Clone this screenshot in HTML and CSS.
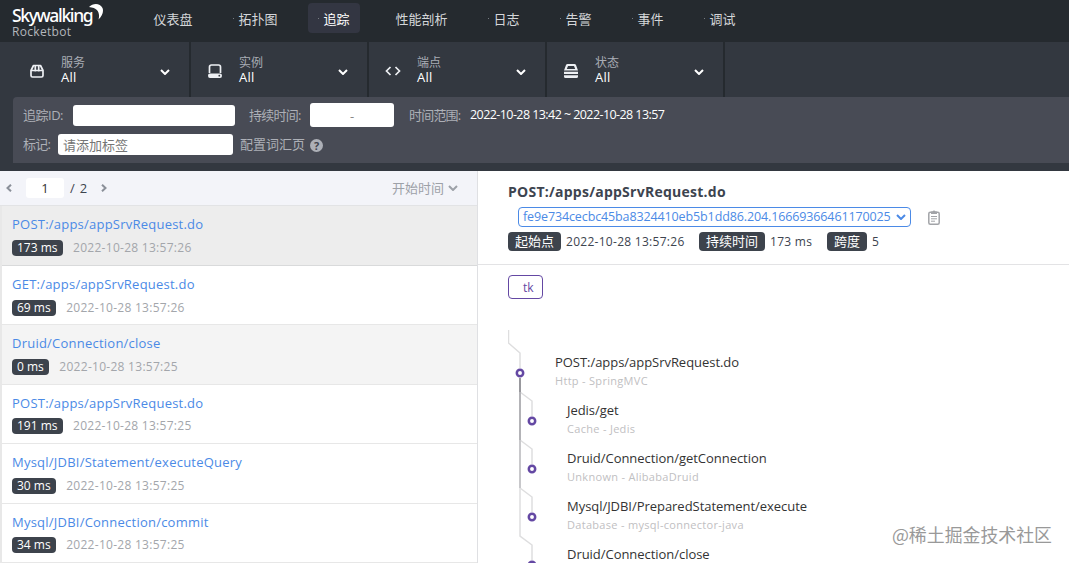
FILE: index.html
```html
<!DOCTYPE html>
<html lang="zh-CN">
<head>
<meta charset="UTF-8">
<meta name="viewport" content="width=device-width, initial-scale=1.0">
<title>SkyWalking Rocketbot</title>
<link rel="stylesheet" href="styles.css">
</head>
<body>
<header class="header">
	<div class="logo">
		<div class="logo-name"><span>Skywalking</span><svg class="moon" width="15" height="17" viewBox="0 0 15 17"><path d="M0 3C4-1 11-1 13.500 4C15 8 13 12 9.500 15.500C11 10 10 4 0 3z" fill="#fff"/></svg></div>
		<div class="logo-sub">Rocketbot</div>
	</div>
	<nav class="nav">
		<a class="first">仪表盘</a>
		<a>拓扑图</a>
		<a class="active">追踪</a>
		<a class="nodot">性能剖析</a>
		<a>日志</a>
		<a>告警</a>
		<a>事件</a>
		<a>调试</a>
	</nav>
</header>

<div class="tools">
	<div class="selectors">
		<div class="selector">
			<svg class="icon" viewBox="0 0 16 16" fill="none" stroke="#eef0f4" stroke-width="1.700" stroke-linejoin="round"><path d="M2 7.500L4.500 2.500H11.500L14 7.500V12.500Q14 14 12.500 14H3.500Q2 14 2 12.500zM2 7.500H14M6.300 3V8.500M9.700 3V8.500"/></svg>
			<div class="sel-text"><span>服务</span><b>All</b></div>
			<svg class="arrow" viewBox="0 0 10 6"><path d="M1 1L5 5L9 1"/></svg>
		</div>
		<div class="selector">
			<svg class="icon" viewBox="0 0 16 16"><path d="M2.500 10V4Q2.500 2 4.500 2H11.500Q13.500 2 13.500 4V10" fill="none" stroke="#eef0f4" stroke-width="1.700"/><path d="M3 10.500H13Q15 10.500 15 12.700T13 15H3Q1 15 1 12.700T3 10.500z" fill="#eef0f4"/><circle cx="12.300" cy="12.700" r=".9" fill="#333840"/></svg>
			<div class="sel-text"><span>实例</span><b>All</b></div>
			<svg class="arrow" viewBox="0 0 10 6"><path d="M1 1L5 5L9 1"/></svg>
		</div>
		<div class="selector">
			<svg class="icon" viewBox="0 0 16 16" fill="none" stroke="#eef0f4" stroke-width="1.700"><path d="M5.500 4L1.500 8L5.500 12M10.500 4L14.500 8L10.500 12"/></svg>
			<div class="sel-text"><span>端点</span><b>All</b></div>
			<svg class="arrow" viewBox="0 0 10 6"><path d="M1 1L5 5L9 1"/></svg>
		</div>
		<div class="selector">
			<svg class="icon" viewBox="0 0 16 16" fill="#eef0f4"><path d="M4.500 1H11.500Q12.500 1 13 2L15 7.500H1L3 2Q3.500 1 4.500 1zM5 3L3.800 6H12.200L11 3z" fill-rule="evenodd"/><path d="M1 8.700H15V11H1zM1 12.200H15V13.500Q15 15 13.500 15H2.500Q1 15 1 13.500z"/></svg>
			<div class="sel-text"><span>状态</span><b>All</b></div>
			<svg class="arrow" viewBox="0 0 10 6"><path d="M1 1L5 5L9 1"/></svg>
		</div>
	</div>
	<div class="search">
		<div class="search-row">
			<label class="trace-label">追踪ID:</label>
			<input class="trace-id" type="text">
			<label class="duration-label">持续时间:</label>
			<div class="duration">-</div>
			<label class="range-label">时间范围:</label>
			<span class="range">2022-10-28 13:42 ~ 2022-10-28 13:57</span>
		</div>
		<div class="search-row second">
			<label>标记:</label>
			<input class="tags" type="text" placeholder="请添加标签">
			<span class="vocab">配置词汇页</span>
			<i class="help">?</i>
		</div>
	</div>
</div>

<main class="main">
	<section class="list">
		<div class="pager">
			<svg class="prev" width="6" height="8" viewBox="0 0 6 8"><path d="M5 .7L1.500 4L5 7.300"/></svg>
			<span class="page">1</span>
			<span class="total">/ 2</span>
			<svg class="next" width="6" height="8" viewBox="0 0 6 8"><path d="M1 .7L4.500 4L1 7.300"/></svg>
			<span class="sort">开始时间</span>
			<svg class="sort-arrow" width="10" height="6" viewBox="0 0 10 6"><path d="M1 1L5 5L9 1"/></svg>
		</div>
		<div class="rows">
			<div class="row selected"><a>POST:/apps/appSrvRequest.do</a><p><em>173 ms</em><time>2022-10-28 13:57:26</time></p></div>
			<div class="row"><a>GET:/apps/appSrvRequest.do</a><p><em>69 ms</em><time>2022-10-28 13:57:26</time></p></div>
			<div class="row hover"><a>Druid/Connection/close</a><p><em>0 ms</em><time>2022-10-28 13:57:25</time></p></div>
			<div class="row"><a>POST:/apps/appSrvRequest.do</a><p><em>191 ms</em><time>2022-10-28 13:57:25</time></p></div>
			<div class="row"><a>Mysql/JDBI/Statement/executeQuery</a><p><em>30 ms</em><time>2022-10-28 13:57:25</time></p></div>
			<div class="row"><a>Mysql/JDBI/Connection/commit</a><p><em>34 ms</em><time>2022-10-28 13:57:25</time></p></div>
		</div>
	</section>

	<section class="detail">
		<div class="detail-head">
			<h1>POST:/apps/appSrvRequest.do</h1>
			<div class="trace-line">
				<div class="trace-select"><span>fe9e734cecbc45ba8324410eb5b1dd86.204.16669366461170025</span><svg width="10" height="6" viewBox="0 0 10 6"><path d="M1 1L5 5L9 1"/></svg></div>
				<svg class="copy" width="12" height="15" viewBox="0 0 12 15"><rect x=".8" y="2.200" width="10.400" height="12" rx="1.500" fill="none" stroke="#a2a4a8" stroke-width="1.500"/><path d="M3 1.500H4.300Q6-.5 7.700 1.500H9V4H3z" fill="#a2a4a8"/><path d="M3 6.500H9M3 8.800H9M3 11.200H7" stroke="#a2a4a8"/></svg>
			</div>
			<div class="meta">
				<em>起始点</em><span class="start">2022-10-28 13:57:26</span>
				<em>持续时间</em><span class="dur">173 ms</span>
				<em>跨度</em><span>5</span>
			</div>
		</div>
		<div class="service-tag">tk</div>
		<div class="tree">
			<svg class="lines" width="36" height="240" viewBox="0 0 36 240" fill="none">
				<g class="links">
					<path d="M.5 1V14L12 24V39"/>
					<path d="M12 63L24 72V87"/>
					<path d="M12 111L24 120V135"/>
					<path d="M12 159L24 168V183"/>
					<path d="M12 159V207L24 216V231"/>
				</g>
				<g stroke-width="2">
					<path d="M12 49V63" stroke="#98989d"/>
					<path d="M12 63V111" stroke="#b3b3b7"/>
					<path d="M12 111V159" stroke="#c8c8cb"/>
				</g>
				<circle cx="12" cy="44" r="3.200"/>
				<circle cx="24" cy="92" r="3.200"/>
				<circle cx="24" cy="140" r="3.200"/>
				<circle cx="24" cy="188" r="3.200"/>
				<circle cx="24" cy="236" r="3.200"/>
			</svg>
			<ul class="spans">
				<li class="root"><b>POST:/apps/appSrvRequest.do</b><small>Http - SpringMVC</small></li>
				<li><b>Jedis/get</b><small>Cache - Jedis</small></li>
				<li><b>Druid/Connection/getConnection</b><small>Unknown - AlibabaDruid</small></li>
				<li><b>Mysql/JDBI/PreparedStatement/execute</b><small>Database - mysql-connector-java</small></li>
				<li class="last"><b>Druid/Connection/close</b></li>
			</ul>
		</div>
	</section>
</main>
<div class="watermark">@稀土掘金技术社区</div>
</body>
</html>
```
FILE: styles.css
```css
*{box-sizing:border-box;}
body,h1,p,ul{margin:0;padding:0;}
ul{list-style:none;}
em,i{font-style:normal;}
svg{display:block;flex:none;}
body{height:563px;overflow:hidden;background:#fff;color:#3d444f;font:13px/18px "Open Sans","Noto Sans CJK SC",sans-serif;white-space:nowrap;}

.header{display:flex;height:42px;background:#252a2f;}
.logo{width:138px;padding:5px 0 0 12px;}
.logo-name{display:flex;height:20px;color:#fff;font:500 17.500px/20px "Noto Sans",sans-serif;}
.logo-name span{width:81px;letter-spacing:-1.35px;}
.moon{margin:-1px 0 0 -4px;}
.logo-sub{color:#b4b7bc;font-size:12px;line-height:13px;letter-spacing:.3px;}
.nav{display:flex;padding-top:3px;}
.nav a{position:relative;height:30px;margin-right:20px;padding:0 10.500px 0 15.500px;border-radius:4px;color:#d4d6d9;line-height:32px;}
.nav a::before{content:"";position:absolute;left:10px;top:15px;width:1px;height:1px;background:#777c82;}
.nav a.first::before,.nav a.nodot::before{display:none;}
.nav .active{background:#333642;color:#fff;}

.tools{height:129px;background:#333840;}
.selectors{display:flex;height:55px;}
.selector{display:flex;align-items:center;width:178px;padding-left:29px;border-right:2px solid #252a2f;}
.selector:first-child{width:191px;}
.selector:nth-child(n+2){padding-left:16px;}
.icon{width:16px;height:16px;margin-top:3px;}
.sel-text{width:99px;margin-left:16px;}
.sel-text span,.sel-text b{display:block;height:15px;font-size:12px;line-height:15px;font-weight:400;color:#a9adb5;}
.sel-text b{color:#fff;font-size:13px;letter-spacing:.3px;}
.arrow{width:10px;height:6px;margin-top:5px;}
.arrow path,.pager path,.trace-select path{fill:none;stroke:#fff;stroke-width:2;}
.search{height:66px;margin-left:13px;padding:6px 10px 0;border-radius:4px 0 0 0;background:#484b55;color:#adb0b7;}
.search-row{display:flex;align-items:center;height:24px;}
.search-row.second{height:22px;margin-top:6px;}
.search input{height:21px;border:0;border-radius:3px;background:#fff;outline:0;font:13px/21px "Noto Sans CJK SC",sans-serif;padding:0 5px;}
.search input::placeholder{color:#757575;opacity:1;}
.trace-label{width:50px;letter-spacing:-.5px;}
.trace-id{width:162px;}
.duration-label{width:61px;margin-left:14px;letter-spacing:-.75px;}
.duration{width:84px;height:24px;border-radius:3px;background:#fff;color:#888;line-height:26px;text-align:center;}
.range-label{width:61px;margin-left:15px;letter-spacing:-.8px;}
.range{color:#fff;font-size:12.500px;line-height:20px;letter-spacing:-.57px;}
.second label{width:35px;letter-spacing:-.8px;}
.second .tags{width:175px;}
.vocab{margin-left:7px;}
.help{width:13px;height:13px;margin:2px 0 0 5px;border-radius:50%;background:#adb0b7;color:#41444d;font:700 11px/13px "Open Sans",sans-serif;text-align:center;}

.main{display:flex;height:392px;overflow:hidden;}
.list{width:478px;border-right:1px solid #dfe0e3;}
.pager{display:flex;align-items:center;height:35px;padding-left:6px;border-bottom:1px solid #e2e3e5;background:#f3f4f9;}
.pager path{stroke:#8b9099;}
.page{width:38px;height:20px;margin-left:14px;border-radius:3px;background:#fff;color:#333;line-height:21px;text-align:center;}
.total{width:19px;margin-left:6px;line-height:20px;letter-spacing:.8px;}
.next{margin-left:12px;}
.sort{margin-left:285px;color:#9da1a8;line-height:20px;}
.sort-arrow{margin-left:4px;}
.pager .sort-arrow path{stroke:#9da1a8;}
.rows{border-left:2px solid #e8e8e8;}
.row{height:59.4px;padding:9px 10px 0;border-bottom:1px solid #e7e7e7;}
.row:first-child{height:60px;}
.row a{display:block;height:18px;color:#4b8ae6;line-height:18px;letter-spacing:.23px;}
.row p{display:flex;margin-top:6.500px;height:16px;align-items:center;}
.row em{height:16px;margin-right:10.500px;padding:0 5px;border-radius:4px;background:#3d434c;color:#fff;font-size:12px;line-height:16px;}
.row time{color:#a3a6ab;font-size:12px;line-height:18px;letter-spacing:.28px;}
.row.selected{background:#ededed;border-color:#d9dadb;}
.row.selected p{margin-top:7px;}
.row.hover{background:#f4f4f4;}

.detail{flex:1;}
.detail-head{height:94px;padding:12px 0 0 30px;border-bottom:1px solid #e3e3e5;}
.detail h1{height:18px;font-size:14px;font-weight:700;line-height:18px;letter-spacing:.25px;}
.trace-line{display:flex;align-items:center;margin:6px 0 0 10px;}
.trace-select{display:flex;align-items:center;width:393px;height:20px;padding:0 4px;border:1px solid #4b8ae6;border-radius:4px;color:#4b8ae6;font-size:12.500px;line-height:20px;letter-spacing:-.12px;}
.trace-select span{width:373px;}
.trace-select path{stroke:#4b8ae6;}
.copy{margin-left:17px;}
.meta{display:flex;align-items:center;height:19px;margin-top:5px;font-size:12px;line-height:21px;letter-spacing:.28px;}
.meta em{height:19px;margin-right:5px;padding:0 7px;border-radius:4px;background:#3d434c;color:#fff;font-size:13px;line-height:19px;letter-spacing:0;}
.meta .start{width:133px;}
.meta .dur{width:57px;}
.service-tag{width:35px;height:24px;margin:10px 0 0 30px;padding-left:14px;border:1px solid #6448a3;border-radius:4px;color:#6448a3;font-size:12px;line-height:24px;}
.tree{display:flex;height:232px;margin:30px 0 0 30px;}
.links path{stroke:#dededf;stroke-width:1.500;}
.lines circle{fill:#fff;stroke:#6448a3;stroke-width:2.500;}
.spans{padding-top:24px;}
.spans li{height:48px;margin-left:23px;}
.spans .root{margin-left:11px;}
.spans .last{height:16px;}
.spans b,.spans small{display:block;height:18px;color:#333;font-size:13px;font-weight:400;line-height:18px;}
.spans b{letter-spacing:-.04px;}
.spans small{color:#bfc0c2;font-size:11px;line-height:19px;letter-spacing:.3px;}
.watermark{position:absolute;right:17px;bottom:17px;color:#999;font:17.900px/24px "Noto Sans CJK SC",sans-serif;}
```
